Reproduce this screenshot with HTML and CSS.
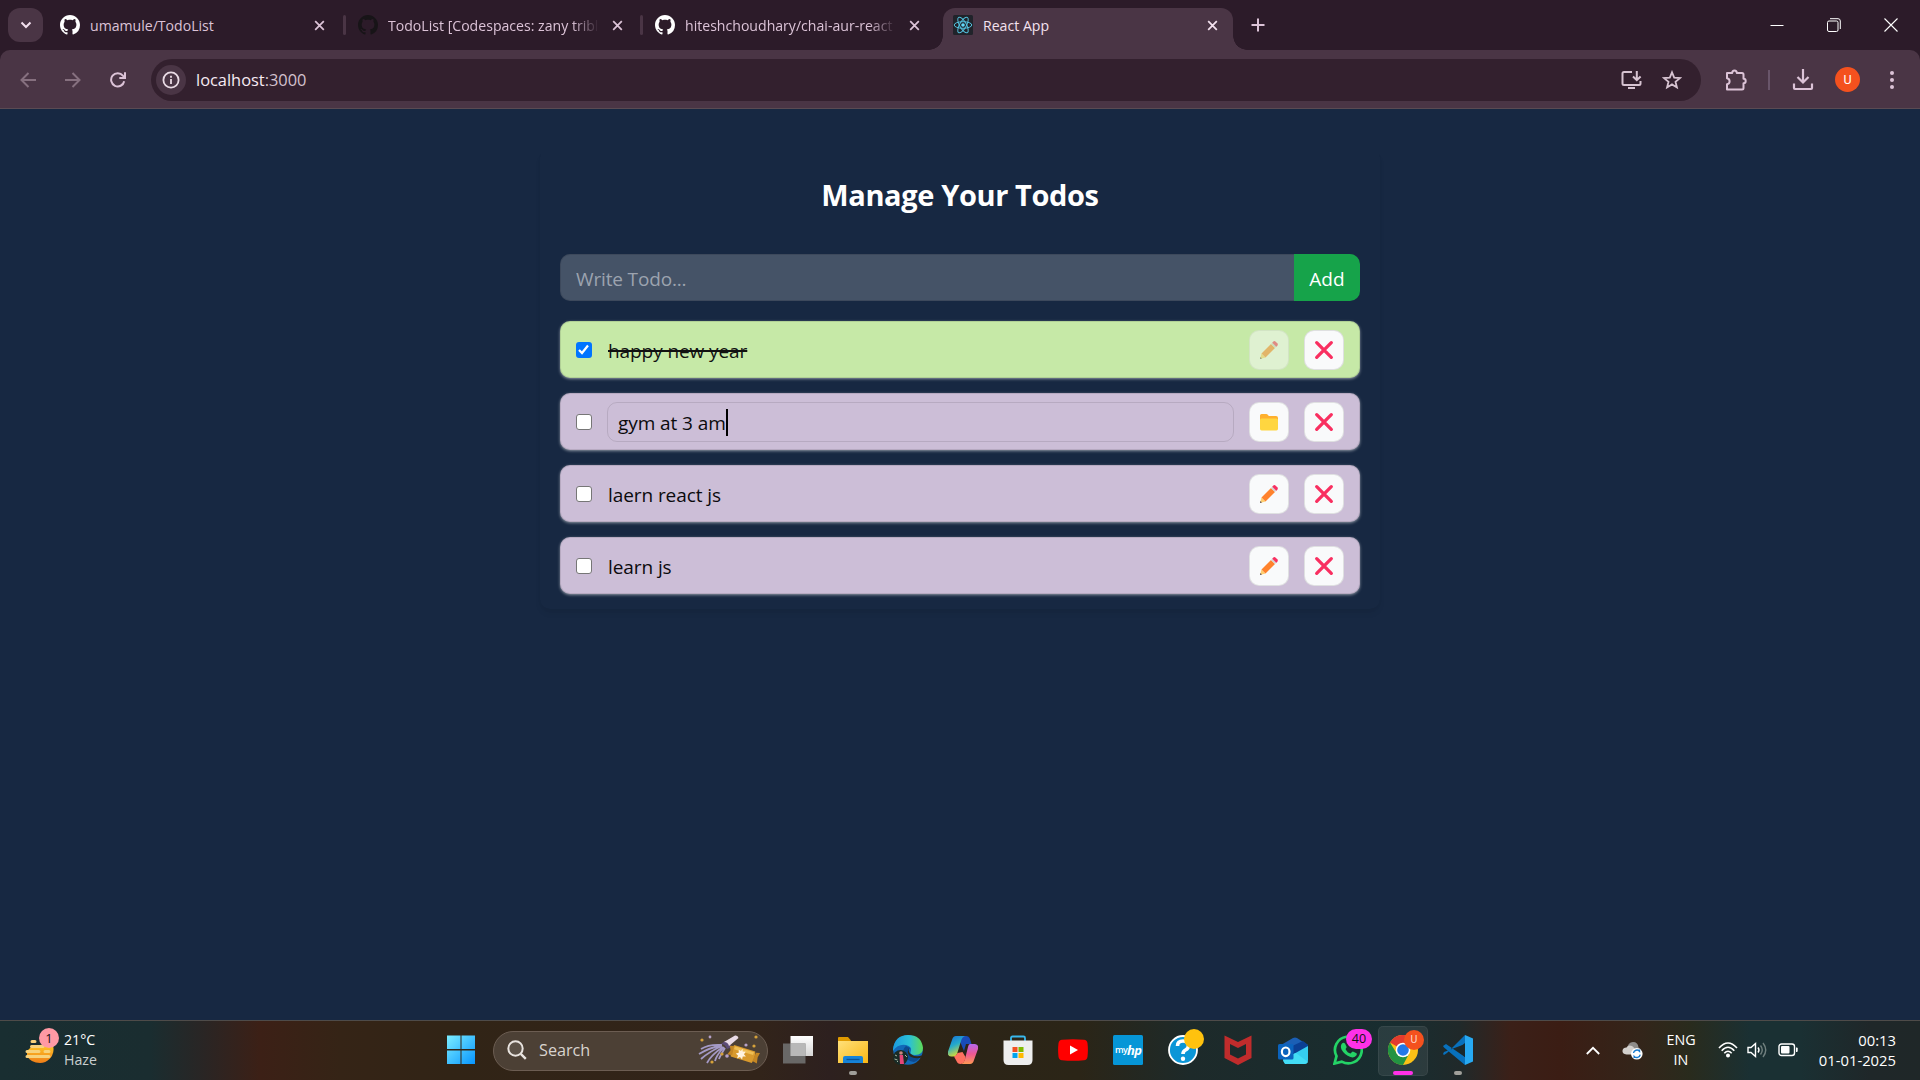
FILE: index.html
```html
<!DOCTYPE html>
<html lang="en">
<head>
<meta charset="utf-8">
<title>React App</title>
<link rel="stylesheet" href="styles.css">
</head>
<body>
<svg class="defs" aria-hidden="true">
  <defs>
    <symbol id="github" viewBox="0 0 16 16"><path d="M8 0C3.58 0 0 3.58 0 8c0 3.54 2.29 6.53 5.47 7.59.4.07.55-.17.55-.38 0-.19-.01-.82-.01-1.49-2.01.37-2.53-.49-2.69-.94-.09-.23-.48-.94-.82-1.13-.28-.15-.68-.52-.01-.53.63-.01 1.08.58 1.23.82.72 1.21 1.87.87 2.33.66.07-.52.28-.87.51-1.07-1.78-.2-3.64-.89-3.64-3.95 0-.87.31-1.59.82-2.15-.08-.2-.36-1.02.08-2.12 0 0 .67-.21 2.2.82.64-.18 1.32-.27 2-.27s1.36.09 2 .27c1.53-1.04 2.2-.82 2.2-.82.44 1.1.16 1.92.08 2.12.51.56.82 1.27.82 2.15 0 3.07-1.87 3.75-3.65 3.95.29.25.54.73.54 1.48 0 1.07-.01 1.93-.01 2.2 0 .21.15.46.55.38A8.01 8.01 0 0 0 16 8c0-4.42-3.58-8-8-8z"/></symbol>
    <symbol id="close" viewBox="0 0 12 12"><path d="M1.3 1.3l9.4 9.4M10.7 1.3l-9.4 9.4" fill="none" stroke="currentColor" stroke-width="1.9"/></symbol>
    <symbol id="pencil" viewBox="0 0 20 20"><path d="M1 19l1.5-5.5 4 4z" fill="#ffcf70"/><path d="M1 19l.5-1.9 1.4 1.4z" fill="#4a4250"/><path d="M2.5 13.500L12 4l4 4-9.500 9.500z" fill="#ff822d"/><path d="M12 4l1.700-1.700 4 4L16 8z" fill="#d3d3d3"/><path d="M13.300 2.700l1-1.100q1.200-1 2.400.1l1.600 1.600q1.100 1.200.1 2.400l-1.100 1z" fill="#f92f60"/></symbol>
    <symbol id="cross" viewBox="0 0 20 20"><path d="M2.700 2.700l14.600 14.600M17.300 2.700L2.700 17.300" stroke="#f92f60" stroke-width="3.300" stroke-linecap="round"/></symbol>
    <symbol id="folder" viewBox="0 0 20 20"><path d="M1 3.500q0-1.500 1.500-1.500h4.700q1 0 1.600.8l1 1.200H17q2 0 2 2V9H1z" fill="#ffb02e"/><path d="M1 8q0-1.500 1.500-1.500h15Q19 6.500 19 8v8.800q0 1.600-1.600 1.600H2.600Q1 18.400 1 16.800z" fill="#ffd640"/></symbol>
  </defs>
</svg>

<header class="tabstrip">
  <button class="tab-search"><svg width="12" height="8" viewBox="0 0 12 8"><path d="M1.500 1.500L6 6l4.500-4.500" fill="none" stroke="currentColor" stroke-width="2"/></svg></button>
  <div class="tab tab-first"><svg class="favicon light"><use href="#github"/></svg><span class="tab-title">umamule/TodoList</span><svg class="tab-close"><use href="#close"/></svg></div>
  <i class="tab-sep"></i>
  <div class="tab"><svg class="favicon dark"><use href="#github"/></svg><span class="tab-title fade">TodoList [Codespaces: zany tribl</span><svg class="tab-close"><use href="#close"/></svg></div>
  <i class="tab-sep"></i>
  <div class="tab"><svg class="favicon light"><use href="#github"/></svg><span class="tab-title fade">hiteshchoudhary/chai-aur-react</span><svg class="tab-close"><use href="#close"/></svg></div>
  <div class="tab active">
    <svg class="favicon" viewBox="0 0 20 20"><rect width="20" height="20" rx="1.500" fill="#20232a"/><g fill="none" stroke="#53c1de" stroke-width="1"><ellipse cx="10" cy="10" rx="8.800" ry="3.300"/><ellipse cx="10" cy="10" rx="8.800" ry="3.300" transform="rotate(60 10 10)"/><ellipse cx="10" cy="10" rx="8.800" ry="3.300" transform="rotate(120 10 10)"/></g><circle cx="10" cy="10" r="1.800" fill="#61dafb"/></svg>
    <span class="tab-title">React App</span><svg class="tab-close"><use href="#close"/></svg>
  </div>
  <button class="new-tab"><svg width="14" height="14" viewBox="0 0 14 14"><path d="M7 .5v13M.5 7h13" stroke="currentColor" stroke-width="2"/></svg></button>
  <div class="win-controls">
    <svg width="14" height="14" viewBox="0 0 14 14"><path d="M.5 7.500h13" stroke="#fff"/></svg>
    <svg width="14" height="14" viewBox="0 0 14 14" fill="none" stroke="#fff"><rect x=".5" y="3" width="10.500" height="10.500" rx="1.500"/><path d="M3 .7h8q2.300 0 2.300 2.300v8"/></svg>
    <svg width="14" height="14" viewBox="0 0 14 14"><path d="M.5.5l13 13M13.500.5l-13 13" stroke="#fff" stroke-width="1.100"/></svg>
  </div>
</header>

<nav class="toolbar">
  <div class="nav-buttons">
    <svg class="off" width="16" height="16" viewBox="0 0 16 16"><path d="M16 8H1.500M8.500 1L1.500 8l7 7"/></svg>
    <svg class="off" width="16" height="16" viewBox="0 0 16 16"><path d="M0 8h14.500M7.500 1l7 7-7 7"/></svg>
    <svg width="16" height="16" viewBox="0 0 16 16"><path d="M14.200 9.200A6.600 6.600 0 1 1 12.900 3.700L15 6M15 .3V6H9.300"/></svg>
  </div>
  <div class="omnibox">
    <span class="site-info"><svg width="18" height="18" viewBox="0 0 18 18" fill="none" stroke="#eadbe5" stroke-width="1.800"><circle cx="9" cy="9" r="7.600"/><path d="M9 8v5M9 4.800v1.900"/></svg></span>
    <span class="url">localhost<span>:3000</span></span>
    <svg class="install" width="21" height="20" viewBox="0 0 21 20" fill="none" stroke="#d7c3d1" stroke-width="2"><path d="M11 2H3q-1.500 0-1.500 1.500v10Q1.500 15 3 15h15q1.500 0 1.500-1.500V11M15.800 1v9M12 6.500l3.800 3.700 3.800-3.700M7 18h7"/></svg>
    <svg class="star" width="20" height="20" viewBox="0 0 20 20" fill="none" stroke="#d7c3d1" stroke-width="1.800"><path d="M10 2.300l2.200 5.400 5.700.4-4.400 3.700 1.400 5.600-4.900-3-4.900 3 1.400-5.600-4.400-3.700 5.700-.4z"/></svg>
  </div>
  <svg class="extensions" width="22" height="22" viewBox="0 0 22 22" fill="none" stroke="#dcc3d7" stroke-width="2"><path d="M2 4h5.200q0-2.500 2.300-2.500T11.800 4H17q1.500 0 1.500 1.500v4.200q2.200 0 2.200 2.300t-2.200 2.300V19q0 1.500-1.500 1.500H2v-5.200q2.600-.3 2.600-3T2 9.200z" stroke-linejoin="round"/></svg>
  <i class="bar-sep"></i>
  <svg class="download" width="22" height="22" viewBox="0 0 22 22" fill="none" stroke="#dcc3d7" stroke-width="2.200"><path d="M11 0v13M5.500 8l5.500 5.500L16.500 8M2 14.500V19q0 1 1 1h16q1 0 1-1v-4.500"/></svg>
  <span class="avatar">U</span>
  <svg class="menu" width="6" height="20" viewBox="0 0 6 20" fill="#dcc3d7"><circle cx="3" cy="3" r="2"/><circle cx="3" cy="10" r="2"/><circle cx="3" cy="17" r="2"/></svg>
</nav>

<main class="page">
  <section class="todo-card">
    <h1>Manage Your Todos</h1>
    <form class="todo-form">
      <input class="new-todo" type="text" placeholder="Write Todo...">
      <button type="button" class="add">Add</button>
    </form>
    <div class="todo-list">
      <div class="todo done"><span class="check checked"><svg width="15" height="15" viewBox="0 0 15 15"><path d="M3 8l3 3 6-7.500" fill="none" stroke="#fff" stroke-width="2.200"/></svg></span><span class="label">happy new year</span><button class="icon faded"><svg><use href="#pencil"/></svg></button><button class="icon"><svg><use href="#cross"/></svg></button></div>
      <div class="todo"><span class="check"></span><span class="label editing">gym at 3 am<i class="caret"></i></span><button class="icon"><svg><use href="#folder"/></svg></button><button class="icon"><svg><use href="#cross"/></svg></button></div>
      <div class="todo"><span class="check"></span><span class="label">laern react js</span><button class="icon"><svg><use href="#pencil"/></svg></button><button class="icon"><svg><use href="#cross"/></svg></button></div>
      <div class="todo"><span class="check"></span><span class="label">learn js</span><button class="icon"><svg><use href="#pencil"/></svg></button><button class="icon"><svg><use href="#cross"/></svg></button></div>
    </div>
  </section>
</main>

<footer class="taskbar">
  <div class="weather">
    <div class="weather-icon">
      <svg width="30" height="26" viewBox="0 0 30 26"><defs><linearGradient id="sun" x2="0" y2="1"><stop offset="0" stop-color="#ffc928"/><stop offset="1" stop-color="#ef7d18"/></linearGradient></defs><path d="M2 12Q8 4 28 6q2 8-3 13.500-4.500 4.500-10 4.500Q6 24 2 17z" fill="url(#sun)"/><path d="M7 2.500h3M6.500 7.500H18M2 12.500h12M20 12.500h4M2 17.500h22" stroke="#f7d27c" stroke-width="3" stroke-linecap="round"/></svg>
      <span class="weather-badge">1</span>
    </div>
    <div class="weather-text"><b>21°C</b><span>Haze</span></div>
  </div>

  <div class="apps">
    <div class="slot"><svg width="30" height="30" viewBox="0 0 30 30"><defs><linearGradient id="win" x2="1" y2="1"><stop offset="0" stop-color="#7ceeff"/><stop offset="1" stop-color="#0795ff"/></linearGradient></defs><path d="M1 .5h13.500V14H1zM15.500.5H29V14H15.500zM1 15.500h13.500V29H1zM15.500 15.500H29V29H15.500z" fill="url(#win)"/></svg></div>
    <div class="search">
      <svg width="20" height="20" viewBox="0 0 20 20" fill="none" stroke="#e9e4e0" stroke-width="2"><circle cx="8.500" cy="8.500" r="7.200" fill="#ffffff18"/><path d="M13.800 13.800l5 5" stroke-width="2.400"/></svg>
      <span>Search</span>
      <svg class="popper" width="62" height="32" viewBox="0 0 62 32"><g stroke="#a49ac6" stroke-width="1.800" fill="none"><path d="M24 11Q11 10 3 15M24 11Q11 14 1 20M24 12Q12 17 3 25M25 13Q13 21 9 29M26 13Q18 22 17 27M27 14q-5 8-6 11"/></g><path d="M23 10q4 0 6 5l5-2q-2-5-7-6z" fill="#5b4b77"/><path d="M26 8L37 1.500q3-.5 3.500 2.500L31 12q-1-4-5-4z" fill="#eadce8"/><g transform="rotate(17 45 20)"><path d="M34 14h22q2 6 0 12H34q-3-6 0-12z" fill="#d99a2d"/><path d="M34 15l-4 1 2 4-2 5 5-1zM57 15l4-1-1 5 1 6-5-1z" fill="#c48624"/><path d="M35 15h20v3H35z" fill="#efbe54"/><path d="M43 15l1 2.800 3-.8-1 3 2.500 1.500-3 1 .2 3-2.700-1.700L40.500 26l.2-3-2.700-1.300 2.500-1.700-.8-2.800 2.500.6z" fill="#fff3df"/></g><g fill="#d6a13a"><circle cx="4" cy="6" r="1.600"/><circle cx="58" cy="3" r="1.600"/><circle cx="56" cy="12" r="1.600"/><circle cx="24" cy="20" r="1.600"/><circle cx="14" cy="28" r="1.600"/></g><g fill="#b6a1c8"><circle cx="12" cy="3" r="1.400"/><circle cx="48" cy="11" r="1.600"/><circle cx="29" cy="22" r="1.800"/></g></svg>
    </div>
    <div class="slot"><svg width="30" height="30" viewBox="0 0 30 30"><defs><linearGradient id="tv" x2="0" y2="1"><stop offset="0" stop-color="#fff"/><stop offset="1" stop-color="#d5d5d5"/></linearGradient></defs><path d="M7.500 1H30v20H7.500z" fill="url(#tv)"/><path d="M0 8.500h22.500v20H0z" fill="#707070" opacity=".9"/><path d="M7.500 8.500h15V21h-15z" fill="#b8b8b8"/></svg></div>
    <div class="slot"><svg width="30" height="30" viewBox="0 0 30 30"><defs><linearGradient id="fe" x2="1" y2="1"><stop offset="0" stop-color="#ffe07a"/><stop offset="1" stop-color="#fab714"/></linearGradient></defs><path d="M0 3q0-1 1-1h9l3 3.500V12H0z" fill="#e09a00"/><path d="M0 6h30v22H0z" fill="url(#fe)"/><path d="M5 28v-5q0-2 2-2h16q2 0 2 2v5z" fill="#1683d8"/><path d="M8.500 24.500h13" stroke="#0a5397" stroke-width="1.300"/></svg><i class="dot"></i></div>
    <div class="slot"><svg width="30" height="30" viewBox="0 0 30 30"><defs><linearGradient id="ed" x2="1"><stop offset="0" stop-color="#1b9ae0"/><stop offset=".55" stop-color="#2bc0d6"/><stop offset="1" stop-color="#5fdc55"/></linearGradient></defs><circle cx="15" cy="15" r="14.800" fill="#1268b8"/><path d="M0 14Q2 0 15 0q13.500 0 15 13 0 7-8 7-6 0-4-4.500 1-4-5-5.500Q5 8.500 0 16z" fill="url(#ed)"/><path d="M13 11q-4 3-2 9 3 6 10 7 5-2 7-6-6 3-11 0-4-4 0-8z" fill="#0c4a90"/><path d="M17 12q-2.500 3 0 6.500 5 4.500 13 1.500l-1 2.500q-7 2-12-1-4.500-4.500 0-9.500z" fill="#2d261a"/><circle cx="7.500" cy="22.500" r="7.500" fill="#192b26"/><circle cx="8" cy="18" r="1.800" fill="#c9867e"/><path d="M6.500 20h3.500l1 9H7z" fill="#e64578"/><path d="M2 20l2 1M1.500 24l3 1M12 20l2 2M4 27l1-1" stroke="#a7b6a0"/></svg></div>
    <div class="slot"><svg width="30" height="28" viewBox="0 0 30 28"><defs><linearGradient id="c1" x2=".4" y2="1"><stop offset="0" stop-color="#186dd8"/><stop offset=".5" stop-color="#24aacb"/><stop offset="1" stop-color="#d7dc35"/></linearGradient><linearGradient id="c2" x2="0" y2="1"><stop offset="0" stop-color="#b568ed"/><stop offset=".5" stop-color="#ee5794"/><stop offset="1" stop-color="#ff9852"/></linearGradient></defs><path d="M18 0q3 0 4 3l1.500 5H18l-2 7-5-12q1-3 3-3z" fill="#194bb9"/><path d="M8 0h9q-3 1-4 5l-4 13q-1 2.500-3.500 2.500H3q-4-.5-3-5L4 4q1-4 4-4z" fill="url(#c1)"/><path d="M22 8h5q4 .5 3 5l-4 11q-1 4-4 4h-9q3-1 4-5l3-12q.5-3 2-3z" fill="url(#c2)"/><path d="M6 20.500Q8.500 20 9.500 17l5-1 3 5q-1 7-5 7-3 0-4-3z" fill="#ff705f"/></svg></div>
    <div class="slot"><svg width="30" height="30" viewBox="0 0 30 30"><path d="M8 7V3q0-1.500 1.500-1.500h11Q22 1.500 22 3v4" fill="none" stroke="#38b8ec" stroke-width="1.800"/><path d="M.5 5.500h29V25q0 5-5 5h-19q-5 0-5-5z" fill="#eee"/><path d="M9.500 12h5v5h-5z" fill="#f25022"/><path d="M15.500 12h5v5h-5z" fill="#7fba00"/><path d="M9.500 18h5v5h-5z" fill="#00a4ef"/><path d="M15.500 18h5v5h-5z" fill="#ffb900"/></svg></div>
    <div class="slot"><svg width="30" height="22" viewBox="0 0 30 22"><path d="M4 .8Q15-.5 26 .8q3 .3 3.500 3.500Q30.300 11 29.500 17.700q-.5 3.200-3.500 3.500-11 1.300-22 0-3-.3-3.500-3.500Q-.3 11 .5 4.300 1 1.100 4 .8z" fill="#f00"/><path d="M12 6.500l8 4.500-8 4.500z" fill="#fff"/></svg></div>
    <div class="slot"><span class="myhp"><span>my</span><b>hp</b></span></div>
    <div class="slot"><svg width="30" height="30" viewBox="0 0 30 30"><circle cx="15" cy="15" r="14" fill="#0b96d7" stroke="#fff" stroke-width="1.800"/><path d="M9.500 11q0-5 5.500-5t5.500 4.500q0 3-3 4.500-2.500 1.300-2.500 4" fill="none" stroke="#fff" stroke-width="3.600"/><circle cx="15" cy="23.700" r="2.200" fill="#fff"/></svg><i class="yellow-badge"></i></div>
    <div class="slot"><svg width="28" height="30" viewBox="0 0 28 30"><path d="M.5.5L14 7 27.500.5V23L14 30 .5 23zM6 9v10.500l8 4 8-4V9l-8 4z" fill="#c02c2c" fill-rule="evenodd"/></svg></div>
    <div class="slot"><svg width="30" height="28" viewBox="0 0 30 28"><path d="M3 9L15 2q2-1 4 0l11 7-13 9z" fill="#1b5fb5"/><path d="M12 11L25 5l5 4v4l-15 9z" fill="#0b3f94"/><path d="M30 10v14q0 4-4 4H7l-2-4z" fill="#35cdf0"/><path d="M5 22l13-5 12 9q-1 2-4 2H8q-3-1-3-6z" fill="#43dcf5"/><rect y="8" width="15.500" height="15.500" rx="1.500" fill="#0b63bd"/><ellipse cx="7.700" cy="15.800" rx="3.800" ry="4.300" fill="none" stroke="#fff" stroke-width="2.200"/></svg></div>
    <div class="slot"><svg width="30" height="30" viewBox="0 0 30 30"><path d="M1.500 28.500l2-7.300A13.400 13.400 0 1 1 8.700 26.600z" fill="none" stroke="#24d366" stroke-width="2.700"/><path d="M9 8.500q1.500-1.500 3 0l1.500 3q.5 1-1 2.500 2 4 5 4.500l1.500-1.500q.7-.8 2 0l2.500 1.300q.7.7 0 2-2 3-6 1.700-6-2-9-7.500-1.500-3.500.5-6z" fill="#24d366"/></svg><span class="wa-badge">40</span></div>
    <div class="slot current"><svg width="30" height="30" viewBox="0 0 30 30"><circle cx="15" cy="15" r="15" fill="#fbc116"/><path d="M15 15L2 7.500A15 15 0 0 1 28 7.500L22 11z" fill="#e33b2e"/><path d="M2 7.500A15 15 0 0 0 15 30l6.200-11.500L15 15 8.800 18.500z" fill="#229342"/><circle cx="15" cy="15" r="7.300" fill="#fff"/><circle cx="15" cy="15" r="5.800" fill="#2378e8"/></svg><span class="chrome-badge">U</span><i class="dot wide"></i></div>
    <div class="slot"><svg width="30" height="30" viewBox="0 0 30 30"><path d="M22 0L4 18l-3 2-1-1 1-2 21-8zM0 11l3-2 19 13v8L1 12.500z" fill="#0871bd"/><path d="M22 0l8 3.500v23L22 30V0z" fill="#27a9f2"/><path d="M22 8v14l-8.500-7z" fill="#19292c"/></svg><i class="dot"></i></div>
  </div>

  <div class="tray">
    <svg width="14" height="9" viewBox="0 0 14 9"><path d="M.8 8L7 1.800 13.200 8" fill="none" stroke="#fff" stroke-width="1.800"/></svg>
    <svg class="cloud" width="21" height="19" viewBox="0 0 21 19"><path d="M5 8Q6 1 11 1q5 0 5.500 5.500 3 1 2.500 5l-9 1.500z" fill="#8e8c8a"/><path d="M4.500 13.500Q0 13 .5 9.500q.5-3 4-3Q6.500 3.500 10 5q2 1 3 3.500v5z" fill="#d3d0cd"/><circle cx="14.800" cy="12.800" r="5.800" fill="#fff"/><path d="M11.500 12a3.500 3.500 0 0 1 6-1.800V8.500M18.200 13.600a3.500 3.500 0 0 1-6 1.800v1.700" fill="none" stroke="#1379cf" stroke-width="1.400"/></svg>
    <div class="lang"><span>ENG</span><span>IN</span></div>
    <svg class="wifi" width="20" height="16" viewBox="0 0 20 16" fill="none" stroke="#fff" stroke-width="1.600"><path d="M1 6q9-10 18 0M3.700 8.700q6.300-7 12.600 0M6.300 11.300q3.700-4 7.400 0"/><circle cx="10" cy="13.500" r="1.200" fill="#fff"/></svg>
    <svg class="volume" width="20" height="18" viewBox="0 0 20 18" fill="none" stroke="#fff" stroke-width="1.400"><path d="M1 6.500h3L8.500 2.500v13L4 11.500H1zM11 6.500q2 2.500 0 5"/><path d="M13.500 4.500q3.500 4.500 0 9M16 2q5.500 7 0 14" stroke="#71807f"/></svg>
    <svg class="battery" width="20" height="14" viewBox="0 0 20 14"><rect x="1" y="1" width="15.500" height="11.500" rx="2.500" fill="none" stroke="#fff" stroke-width="1.400"/><rect x="3" y="3" width="8.500" height="7.500" rx="1" fill="#fff"/><path d="M18 4.500h.7q1 0 1 1v2.500q0 1-1 1H18z" fill="#fff"/></svg>
    <div class="clock"><span class="time">00:13</span><span class="date">01-01-2025</span></div>
  </div>
</footer>
</body>
</html>
```
FILE: styles.css
```css
* { box-sizing: border-box; }
body {
  margin: 0;
  width: 1920px;
  height: 1080px;
  overflow: hidden;
  display: flex;
  flex-direction: column;
  background: #2c1b29;
  font-family: "Open Sans", "Noto Sans", sans-serif;
}
button { border: 0; padding: 0; background: none; font-family: inherit; color: inherit; }
svg { flex: none; display: block; }
.defs { position: absolute; width: 0; height: 0; }

/* tab strip */
.tabstrip {
  height: 50px;
  flex: none;
  display: flex;
  align-items: center;
  padding-left: 8px;
  background: #2c1b29;
  color: #dcc3d7;
}
.tab-search {
  width: 35px;
  height: 34px;
  border-radius: 12px;
  background: #4a3545;
  display: grid;
  place-items: center;
  color: #f3dfee;
}
.tab { display: flex; align-items: center; width: 286px; padding-left: 10px; }
.tab-first { width: 300px; padding-left: 17px; }
.favicon { width: 20px; height: 20px; }
.favicon.light { fill: #fff; }
.favicon.dark { fill: #171417; }
.tab-title {
  width: 211px;
  margin-left: 10px;
  padding-top: 1px;
  font-size: 14.1px;
  line-height: 20px;
  white-space: nowrap;
}
.fade { -webkit-mask-image: linear-gradient(90deg, #000 184px, transparent 211px); mask-image: linear-gradient(90deg, #000 184px, transparent 211px); }
.tab-close { width: 11px; height: 11px; margin-left: 13px; }
.tab-sep { width: 3px; height: 20px; margin: 0 2px 0 0; border-radius: 2px; background: #4a3545; }
.tab-sep + .tab { width: 292px; }
.tab.active {
  position: relative;
  width: 290px;
  height: 42px;
  align-self: flex-end;
  margin-left: 6px;
  padding: 0 0 8px 10px;
  border-radius: 12px 12px 0 0;
  background: #4a3545;
  color: #f3e1ee;
}
.tab.active::before, .tab.active::after {
  content: "";
  position: absolute;
  bottom: 0;
  width: 14px;
  height: 14px;
}
.tab.active::before { left: -14px; background: radial-gradient(circle at 0 0, transparent 13.5px, #4a3545 14px); }
.tab.active::after { right: -14px; background: radial-gradient(circle at 100% 0, transparent 13.5px, #4a3545 14px); }
.new-tab { margin-left: 18px; }
.win-controls { display: flex; gap: 43px; margin-left: auto; padding-right: 22px; }

/* toolbar */
.toolbar {
  height: 59px;
  flex: none;
  display: flex;
  align-items: center;
  border-radius: 10px 10px 0 0;
  background: linear-gradient(#4a3545 58px, #5a4b53 58px);
}
.nav-buttons { display: flex; gap: 29px; width: 151px; padding-left: 20px; }
.nav-buttons svg { fill: none; stroke: #dcc3d7; stroke-width: 2; }
.nav-buttons .off { stroke: #86707f; }
.omnibox {
  width: 1550px;
  height: 42px;
  border-radius: 21px;
  background: #33202e;
  display: flex;
  align-items: center;
  padding-left: 5px;
}
.site-info { width: 30px; height: 30px; border-radius: 50%; background: #4a3545; display: grid; place-items: center; }
.url { margin-left: 10px; font-size: 16.4px; color: #f7eaf3; }
.url span { color: #d4c2cf; }
.install { margin-left: auto; }
.star { margin: 0 19px 0 20px; }
.extensions { margin-left: 24px; }
.bar-sep { width: 2px; height: 20px; margin: 0 22px 0 21px; background: #69556a; }
.avatar {
  width: 25px;
  height: 25px;
  margin-left: 21px;
  border-radius: 50%;
  background: #f4511e;
  color: #fff;
  font: 12.5px/25px Roboto, sans-serif;
  text-align: center;
}
.menu { margin-left: 29px; }

/* page */
.page { flex: 1; padding-top: 40px; background: #172842; }
.todo-card {
  width: 840px;
  height: 460px;
  margin: 0 auto;
  padding: 26px 20px 14px;
  border-radius: 10px;
  box-shadow: 0 5px 7px -1px rgba(0, 0, 0, .06), 0 2px 5px -2px rgba(0, 0, 0, .06);
  color: #fff;
}
h1 { margin: 0 0 39px; font-size: 29px; letter-spacing: -.38px; line-height: 40px; font-weight: 700; text-align: center; }
.todo-form { display: flex; height: 47px; margin-bottom: 20px; }
.new-todo {
  flex: 1;
  border: 1px solid rgba(0, 0, 0, .1);
  border-right: 0;
  border-radius: 10px 0 0 10px;
  padding: 2px 15px 0;
  background: rgba(255, 255, 255, .2);
  font: 19px "Open Sans", sans-serif;
  letter-spacing: -.15px;
  color: #fff;
}
.new-todo::placeholder { color: #9ca3af; opacity: 1; }
.add { width: 66px; border-radius: 0 10px 10px 0; background: #16a34a; font-size: 19px; padding-top: 2px; }
.todo-list { display: grid; gap: 15px; }
.todo {
  height: 57px;
  display: flex;
  align-items: center;
  gap: 15px;
  padding: 0 15px;
  border: 1px solid rgba(0, 0, 0, .1);
  border-radius: 10px;
  background: #ccbed7;
  color: #0b0a0c;
  box-shadow: 0 1px 3px rgba(255, 255, 255, .5);
}
.todo.done { background: #c6e9a7; }
.check {
  width: 16px;
  height: 16px;
  border: 1px solid #767676;
  border-radius: 3px;
  background: #fff;
  flex: none;
}
.check.checked { border: 0; background: #0075ff; }
.label {
  flex: 1;
  height: 40px;
  border: 1px solid transparent;
  border-radius: 10px;
  padding-top: 2px;
  font-size: 19px;
  letter-spacing: -.08px;
  line-height: 38px;
  display: flex;
  align-items: center;
  white-space: pre;
}
.done .label { text-decoration: line-through; text-decoration-thickness: 2px; color: #111; }
.label.editing { padding-left: 10px; border-color: rgba(0, 0, 0, .1); }
.caret { width: 2px; height: 27px; margin-bottom: 1px; background: #000; }
.icon {
  width: 40px;
  height: 40px;
  flex: none;
  border: 1px solid rgba(0, 0, 0, .1);
  border-radius: 10px;
  background: #f9fafb;
  display: grid;
  place-items: center;
}
.icon svg { width: 20px; height: 20px; margin-top: 1px; }
.icon.faded { opacity: .5; }

/* taskbar */
.taskbar {
  height: 60px;
  flex: none;
  display: flex;
  align-items: center;
  border-top: 1px solid #4e4b49;
  background: linear-gradient(90deg, #192e31 0, #1a2d30 150px, #2a2524 205px, #3c2016 260px, #352416 340px, #312416 450px, #32241a 760px, #2d201f 830px, #2d2417 900px, #2b2517 1080px, #1d2a2a 1190px, #182d30 1400px, #20292a 1460px, #3b2018 1510px, #3b1d14 1560px, #33251a 1640px, #292b1d 1690px, #1a3033 1750px, #1a3033 1800px, #1f2729 1870px, #1f2728 1920px);
  color: #fff;
}
.weather { display: flex; width: 436px; padding-left: 25px; height: 59px; }
.weather-icon { position: relative; width: 34px; padding-top: 18px; }
.weather-badge {
  position: absolute;
  left: 14px;
  top: 7px;
  width: 20px;
  height: 20px;
  border-radius: 50%;
  background: #ff99a4;
  color: #1c1014;
  font-size: 13px;
  line-height: 20px;
  text-align: center;
}
.weather-text { padding: 9px 0 0 5px; font-size: 14.2px; line-height: 20px; display: grid; align-content: start; }
.weather-text b { font-weight: 400; }
.weather-text span { color: #c9cecf; }
.apps { display: flex; align-items: center; gap: 5px; }
.slot { position: relative; width: 50px; height: 50px; border-radius: 5px; display: grid; place-items: center; }
.slot > svg, .myhp { margin-bottom: 1px; }
.slot.current { background: rgba(255, 255, 255, .08); box-shadow: inset 0 0 0 1px rgba(255, 255, 255, .06); }
.search {
  width: 275px;
  height: 40px;
  margin: 0 0 0 2px;
  border: 1px solid #6c5d52;
  border-radius: 20px;
  background: #4c4035;
  display: flex;
  align-items: center;
  padding: 0 7px 1px 13px;
  font-size: 16.2px;
  color: #d9d4cf;
}
.search span { margin-left: 12px; }
.popper { margin-left: auto; }
.dot { position: absolute; left: 21px; bottom: 1px; width: 8px; height: 4px; border-radius: 2px; background: #a09f9a; }
.dot.wide { left: 15px; width: 20px; background: #fe31e8; }
.myhp {
  width: 30px;
  height: 30px;
  border-radius: 1.5px;
  background: #0696d7;
  display: flex;
  align-items: center;
  justify-content: center;
  font: italic 10px/30px "Open Sans", sans-serif;
}
.myhp span { font-style: normal; font-weight: 600; font-size: 9px; letter-spacing: -.6px; }
.myhp b { font-size: 13px; letter-spacing: -.8px; }
.yellow-badge { position: absolute; left: 26px; top: 3px; width: 20px; height: 20px; border-radius: 50%; background: #ffc20e; }
.wa-badge {
  position: absolute;
  left: 23px;
  top: 3px;
  width: 26px;
  height: 20px;
  border-radius: 10px;
  background: #fe31e8;
  color: #111;
  font-size: 12.500px;
  line-height: 20px;
  text-align: center;
}
.chrome-badge {
  position: absolute;
  left: 26px;
  top: 4px;
  width: 20px;
  height: 20px;
  border-radius: 50%;
  background: #f4511e;
  color: #ffd8c9;
  font: 10.500px/20px Roboto, sans-serif;
  text-align: center;
}
.tray { display: flex; align-items: center; flex: 1; padding: 0 0 1px 103px; font-size: 14.3px; line-height: 20px; }
.cloud { margin-left: 22px; }
.lang { display: grid; width: 30px; margin-left: 23px; text-align: center; }
.wifi { margin-left: 22px; }
.volume { margin-left: 9px; }
.battery { margin-left: 11px; }
.clock { display: grid; margin-left: auto; padding-right: 24px; text-align: right; font-size: 14.8px; }
```
